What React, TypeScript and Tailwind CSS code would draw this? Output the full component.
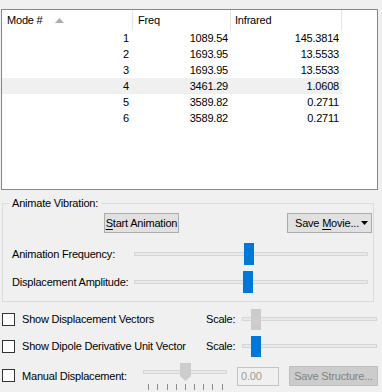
import React from "react";

type Mode = { n: number; freq: string; ir: string };

const modes: Mode[] = [
  { n: 1, freq: "1089.54", ir: "145.3814" },
  { n: 2, freq: "1693.95", ir: "13.5533" },
  { n: 3, freq: "1693.95", ir: "13.5533" },
  { n: 4, freq: "3461.29", ir: "1.0608" },
  { n: 5, freq: "3589.82", ir: "0.2711" },
  { n: 6, freq: "3589.82", ir: "0.2711" },
];

const ticks = [5, 14, 24, 33, 42, 51, 60, 69, 79];

function Track({ width, thumbLeft, thumbColor, thumbHeight }: { width: string; thumbLeft: number; thumbColor: string; thumbHeight: number }) {
  return (
    <div className={`relative h-[22px] ${width} flex items-center`}>
      <div className="w-full h-[4px] bg-[#e7eaea] border border-[#d6d6d6]" />
      <div
        className={`absolute w-[10px] ${thumbColor}`}
        style={{ left: thumbLeft, top: (22 - thumbHeight) / 2, height: thumbHeight }}
      />
    </div>
  );
}

function CheckBox() {
  return <div className="w-[13px] h-[13px] border border-[#333333] bg-white shrink-0" />;
}

export default function App() {
  return (
    <div className="w-[382px] h-[392px] overflow-hidden bg-[#f0f0f0] text-black text-[11px] leading-[13px] tracking-[-0.2px] font-['Liberation_Sans',Arial,sans-serif]">
      {/* mode list */}
      <div className="ml-[1px] mt-[9px] w-[377px] h-[181px] border border-[#828790] bg-white">
        <div className="flex h-[20px]">
          <div className="w-[131px] border-r border-[#e5e5e5] pl-[5px] flex items-center">
            <span>Mode #</span>
            <svg width="9" height="5" viewBox="0 0 9 5" className="ml-[12px]">
              <path d="M0 5 L4.5 0 L9 5 Z" fill="#abadb3" />
            </svg>
          </div>
          <div className="w-[98px] border-r border-[#e5e5e5] pl-[5px] flex items-center">Freq</div>
          <div className="w-[111px] border-r border-[#e5e5e5] pl-[4px] flex items-center">Infrared</div>
        </div>
        {modes.map((m) => (
          <div key={m.n} className={`flex h-[16px] w-[340px] items-center ${m.n === 4 ? "bg-[#f0f0f0]" : ""}`}>
            <div className="w-[131px] text-right pr-[4px]">{m.n}</div>
            <div className="w-[98px] text-right pr-[3px]">{m.freq}</div>
            <div className="w-[111px] text-right pr-[3px]">{m.ir}</div>
          </div>
        ))}
      </div>

      {/* animate vibration group */}
      <fieldset className="mt-[7px] ml-[2px] w-[372px] h-[105px] border border-[#dcdcdc] p-0 m-0">
        <legend className="ml-[6px] px-[3px] leading-[13px]">Animate Vibration:</legend>
        <div className="flex mt-[3px] pl-[101px] pr-[1px]">
          <button className="w-[75px] h-[20px] bg-[#e1e1e1] border border-[#adadad]">
            <span className="underline underline-offset-[2px]">S</span>tart Animation
          </button>
          <button className="ml-auto w-[85px] h-[20px] bg-[#e1e1e1] border border-[#adadad] flex items-center pl-[7px]">
            <span>
              Save <span className="underline underline-offset-[2px]">M</span>ovie...
            </span>
            <svg width="7" height="4" viewBox="0 0 7 4" className="ml-[2px]">
              <path d="M0 0 L7 0 L3.5 4 Z" fill="#000" />
            </svg>
          </button>
        </div>
        <div className="flex items-center mt-[10px] pl-[9px]">
          <span className="w-[122px]">Animation Frequency:</span>
          <Track width="w-[234px]" thumbLeft={110} thumbColor="bg-[#0078d7]" thumbHeight={22} />
        </div>
        <div className="flex items-center mt-[6px] pl-[9px]">
          <span className="w-[122px]">Displacement Amplitude:</span>
          <Track width="w-[234px]" thumbLeft={109} thumbColor="bg-[#0078d7]" thumbHeight={22} />
        </div>
      </fieldset>

      {/* display options */}
      <div className="flex items-center h-[22px] mt-[6px] pl-[2px]">
        <CheckBox />
        <span className="ml-[7px] w-[184px]">Show Displacement Vectors</span>
        <span className="w-[36px]">Scale:</span>
        <Track width="w-[135px]" thumbLeft={9} thumbColor="bg-[#cccccc]" thumbHeight={21} />
      </div>
      <div className="flex items-center h-[22px] mt-[5px] pl-[2px]">
        <CheckBox />
        <span className="ml-[7px] w-[184px]">Show Dipole Derivative Unit Vector</span>
        <span className="w-[36px]">Scale:</span>
        <Track width="w-[135px]" thumbLeft={9} thumbColor="bg-[#0078d7]" thumbHeight={21} />
      </div>
      <div className="flex items-start h-[27px] mt-[6px] pl-[2px]">
        <div className="mt-[6px]">
          <CheckBox />
        </div>
        <span className="ml-[7px] mt-[7px] w-[121px]">Manual Displacement:</span>
        <div className="relative w-[84px] h-[27px]">
          <div className="mt-[7px] w-full h-[4px] bg-[#e7eaea] border border-[#d6d6d6]" />
          <svg width="11" height="18" viewBox="0 0 11 18" className="absolute left-[37px] top-0">
            <path d="M0 0 H11 V13 L5.5 18 L0 13 Z" fill="#cdcdcd" />
          </svg>
          <svg width="84" height="6" viewBox="0 0 84 6" className="absolute left-0 top-[21px]">
            {ticks.map((t) => (
              <line key={t} x1={t + 0.5} y1="0" x2={t + 0.5} y2="6" stroke="#8c8c8c" strokeWidth="1" />
            ))}
          </svg>
        </div>
        <div className="ml-[10px] mt-[4px] w-[42px] h-[19px] border border-[#c4c4c4] pl-[3px] flex items-center text-[#9d9d9d]">
          0.00
        </div>
        <button className="ml-[10px] mt-[3px] w-[89px] h-[20px] bg-[#cccccc] border border-[#bfbfbf] text-[#838383]">
          Save Structure...
        </button>
      </div>
    </div>
  );
}
